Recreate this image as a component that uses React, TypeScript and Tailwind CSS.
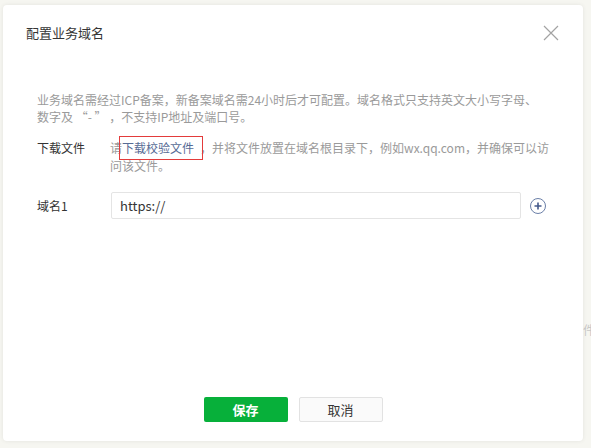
const font = { fontFamily: '"Noto Sans CJK SC", "Noto Sans", sans-serif' };

function PlusCircle() {
  return (
    <svg width="18" height="18" viewBox="0 0 18 18" className="shrink-0">
      <circle cx="9" cy="9" r="7.5" fill="none" stroke="#6b7fa8" strokeWidth="1" />
      <path d="M9 5.5v7M5.5 9h7" stroke="#44598a" strokeWidth="1.6" />
    </svg>
  );
}

function CloseIcon() {
  return (
    <svg width="16" height="16" viewBox="0 0 16 16" className="shrink-0">
      <path d="M1 1l14 14M15 1L1 15" stroke="#a3a3a3" strokeWidth="1.2" />
    </svg>
  );
}

export default function App() {
  return (
    <div
      className="relative w-[591px] h-[448px] overflow-hidden bg-[#f6f6f1] pl-[3px] pt-[5px]"
      style={font}
    >
      {/* page content behind the dialog */}
      <div className="absolute left-[583px] top-[321px] w-[8px] overflow-hidden">
        <span className="block w-[12px] text-[12px] leading-[17px] text-[#c8c8c8]">件</span>
      </div>

      <div className="relative flex h-[436px] w-[580px] flex-col rounded-[4px] bg-white shadow-[0_0_4px_rgba(0,0,0,0.08)]">
        {/* Header */}
        <div className="flex h-[56px] items-center justify-between pl-[23px] pr-[24px]">
          <h2 className="text-[13px] text-[#353535]">配置业务域名</h2>
          <CloseIcon />
        </div>

        {/* Body */}
        <div className="flex-1 px-[34px] pt-[30px]">
          <p className="text-[12px] leading-[17px] text-[#9a9a9a]">
            业务域名需经过ICP备案，新备案域名需24小时后才可配置。域名格式只支持英文大小写字母、
            <br />
            数字及 “- ” ，不支持IP地址及端口号。
          </p>

          <div className="mt-[14px] flex text-[12px] leading-[18px]">
            <span className="w-[73px] shrink-0 text-[#333]">下载文件</span>
            <p className="w-[442px] text-[#9a9a9a]">
              请
              <span className="relative pr-[6px] text-[#576b95]">
                下载校验文件
                <span className="absolute -left-[3px] -right-[3px] -top-[3px] -bottom-[4px] border border-[#e33b3b]" />
              </span>
              ，并将文件放置在域名根目录下，例如wx.qq.com，并确保可以访问该文件。
            </p>
          </div>

          <div className="mt-[17px] flex items-center">
            <span className="w-[74px] shrink-0 text-[12px] text-[#333]">域名1</span>
            <div className="flex h-[27px] w-[410px] items-center rounded-[2px] border border-[#e4e4e4] px-[8px] text-[13px] text-[#353535]">
              https://
            </div>
            <span className="ml-[8px]">
              <PlusCircle />
            </span>
          </div>
        </div>

        {/* Footer */}
        <div className="flex justify-center gap-[11px] pb-[19px]">
          <button className="h-[25px] w-[84px] rounded-[2px] bg-[#07b03a] text-[13px] font-bold text-white">
            保存
          </button>
          <button className="h-[25px] w-[84px] rounded-[2px] border border-[#e2e2e2] bg-[#fafafa] text-[13px] text-[#353535]">
            取消
          </button>
        </div>
      </div>
    </div>
  );
}
